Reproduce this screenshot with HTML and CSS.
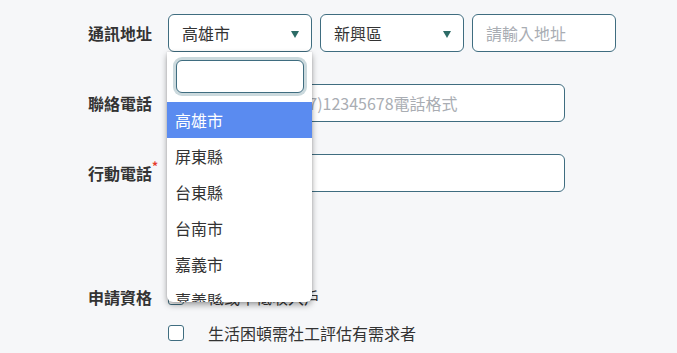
FILE: index.html
```html
<!DOCTYPE html>
<html lang="zh-Hant">
<head>
  <meta charset="UTF-8">
  <meta name="viewport" content="width=device-width, initial-scale=1.0">
  <title>申請表</title>
  <link rel="stylesheet" href="styles.css">
</head>
<body>
  <form class="form">
    <div class="row">
      <label class="label">通訊地址</label>
      <div class="controls">
        <div class="select-wrap">
          <div class="select">高雄市<span class="arrow"></span></div>
          <div class="dropdown">
            <div class="search"><input class="search-input" type="text"></div>
            <ul class="options">
              <li class="option active">高雄市</li>
              <li class="option">屏東縣</li>
              <li class="option">台東縣</li>
              <li class="option">台南市</li>
              <li class="option">嘉義市</li>
              <li class="option">嘉義縣</li>
              <li class="option">雲林縣</li>
            </ul>
          </div>
        </div>
        <div class="select">新興區<span class="arrow"></span></div>
        <input class="input short" type="text" placeholder="請輸入地址">
      </div>
    </div>
    <div class="row">
      <label class="label">聯絡電話</label>
      <input class="input wide" type="text" placeholder="請輸入市話，如(07)12345678電話格式">
    </div>
    <div class="row">
      <label class="label">行動電話<span class="req">*</span></label>
      <input class="input wide" type="text">
    </div>
    <div class="row top">
      <label class="label">申請資格</label>
      <div class="checks">
        <label class="check"><span class="box"></span>低或中低收入戶</label>
        <label class="check"><span class="box"></span>生活困頓需社工評估有需求者</label>
      </div>
    </div>
  </form>
</body>
</html>
```

FILE: styles.css
```css
body {
  margin: 0;
  background-color: #f6f7f9;
  font-family: "Noto Sans CJK TC", "Noto Sans", sans-serif;
  color: #333;
  font-size: 16px;
}
.form {
  padding: 14px 0 0 88px;
}
.row {
  display: flex;
  align-items: center;
  margin-bottom: 32px;
}
.row.top {
  align-items: flex-start;
  margin-top: 87px;
  margin-bottom: 0;
}
.label {
  width: 80px;
  font-weight: bold;
  line-height: 38px;
}
.row.top .label {
  line-height: 36px;
}
.req {
  color: #e53b2c;
  font-size: 12px;
  vertical-align: top;
  line-height: 24px;
}
.controls {
  display: flex;
  gap: 8px;
}
.select-wrap {
  position: relative;
}
.select {
  position: relative;
  width: 142px;
  height: 36px;
  box-sizing: content-box;
  border: 1px solid #3f6d80;
  border-radius: 6px;
  background: #fff;
  line-height: 36px;
  text-indent: 13px;
}
.arrow {
  position: absolute;
  right: 12px;
  top: 16px;
  border-left: 4px solid transparent;
  border-right: 4px solid transparent;
  border-top: 7px solid #2c6b66;
}
.input {
  height: 38px;
  box-sizing: border-box;
  border: 1px solid #3f6d80;
  border-radius: 6px;
  background: #fff;
  padding: 0 13px;
  font-family: inherit;
  font-size: 16px;
  color: #333;
  outline: none;
}
.input::placeholder {
  color: #a9adb3;
}
.short {
  width: 144px;
}
.wide {
  width: 397px;
}
.dropdown {
  position: absolute;
  top: 38px;
  left: -1px;
  width: 145px;
  height: 250px;
  background: #fff;
  border-radius: 0 0 6px 6px;
  box-shadow: 0 3px 6px rgba(0, 0, 0, 0.35), 0 0 2px rgba(0, 0, 0, 0.15);
  overflow: hidden;
  z-index: 2;
}
.search {
  padding: 8px 8px 9px 9px;
}
.search-input {
  display: block;
  width: 128px;
  height: 33px;
  box-sizing: border-box;
  border: 1px solid #3f6d80;
  border-radius: 6px;
  box-shadow: 0 0 0 3px #cbd9dd;
  outline: none;
  padding: 0 5px;
  font-size: 16px;
}
.options {
  list-style: none;
  margin: 0;
  padding: 0;
}
.option {
  height: 36px;
  line-height: 36px;
  padding-left: 8px;
  color: #333;
}
.option.active {
  background: #5a8bf0;
  color: #fff;
}
.checks {
  display: flex;
  flex-direction: column;
}
.check {
  display: flex;
  align-items: center;
  line-height: 36px;
}
.box {
  width: 14px;
  height: 14px;
  border: 1.5px solid #3f6d80;
  border-radius: 3px;
  background: #fff;
  margin-right: 24px;
}
```
